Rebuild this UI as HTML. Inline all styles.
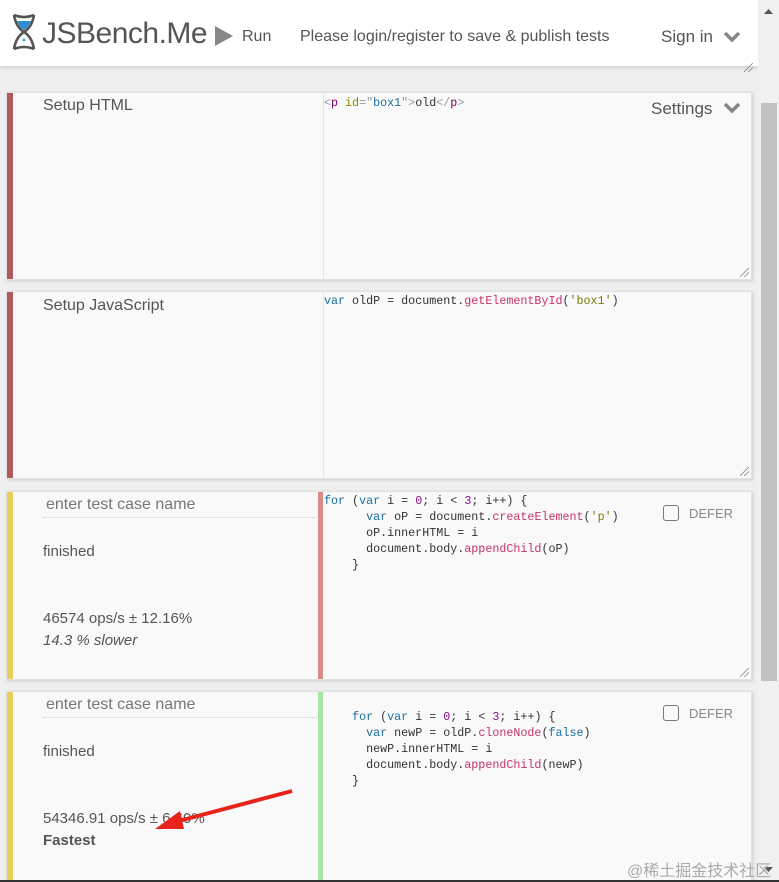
<!DOCTYPE html>
<html><head><meta charset="utf-8"><style>
*{box-sizing:border-box;margin:0;padding:0}
body{width:779px;height:882px;overflow:hidden;background:#efefef;font-family:"Liberation Sans",sans-serif;position:relative;color:#444}
.hdr{position:absolute;left:0;top:0;width:758px;height:66px;background:#fff;box-shadow:0 2px 5px rgba(0,0,0,.12)}
.sb{position:absolute;left:758px;top:0;width:21px;height:882px;background:#f0f0f0}
.thumb{position:absolute;left:761px;top:103px;width:16px;height:578px;background:#c1c1c1}
.panel{position:absolute;left:6px;width:746px;background:#f9f9f9;border:1px solid #e2e2e2;box-shadow:1px 1px 3px rgba(0,0,0,.15)}
.bar{position:absolute;left:0;top:0;bottom:0;width:6px}
.left{position:absolute;left:6px;top:0;bottom:0;width:311px;border-right:1px solid #e4e4e4}
.lbl{position:absolute;left:36px;top:4px;font-size:16px;color:#555}
.code{position:absolute;left:317px;top:2px;font-family:"Liberation Mono",monospace;font-size:11.7px;line-height:16px;white-space:pre;color:#333}
.div{position:absolute;left:311px;top:0;bottom:0;width:5px}
.k{color:#1a6fa0}.n{color:#8a0e8a}.f{color:#c8336a}.s{color:#7a7a0a}.a{color:#8a8a00}.t{color:#800060}.g{color:#999}
.name{position:absolute;left:36px;top:4px;width:276px;height:22px;border-bottom:1px dotted #ccc;font-size:16px;color:#777;padding-left:3px}
.txt{position:absolute;left:36px;font-size:15px;color:#555}
.defer{position:absolute;left:656px;top:13px;font-size:13px;color:#888}
.defer span{display:inline-block;width:16px;height:16px;border:1.5px solid #777;border-radius:3px;vertical-align:-3px;margin-right:10px}
.grip{position:absolute;right:2px;bottom:2px;width:9px;height:9px;background:linear-gradient(135deg,transparent 45%,#888 46%,#888 52%,transparent 53%,transparent 70%,#888 71%,#888 77%,transparent 78%)}
</style></head><body>
<div class="hdr">
<svg style="position:absolute;left:12px;top:13px" width="24" height="38" viewBox="0 0 24 38"><path d="M2 2 Q12 6 22 2 M2 2 Q4 14 12 19 Q20 24 22 36 M22 2 Q20 14 12 19 Q4 24 2 36 M2 36 Q12 32 22 36" stroke="#555" stroke-width="2.6" fill="none"/><path d="M5 8 L19 8 Q16 15 12 17 Q8 15 5 8Z" fill="#2b8fd1"/><circle cx="12" cy="27" r="1.3" fill="#2b8fd1"/></svg>
<div style="position:absolute;left:42px;top:17px;font-size:30px;color:#555;letter-spacing:-0.5px">JSBench.Me</div>
<svg style="position:absolute;left:215px;top:26px" width="18" height="20"><path d="M0 0 L18 10 L0 20Z" fill="#888"/></svg>
<div style="position:absolute;left:242px;top:28px;font-size:16px;color:#555">Run</div>
<div style="position:absolute;left:300px;top:28px;font-size:16px;color:#555">Please login/register to save &amp; publish tests</div>
<div style="position:absolute;left:661px;top:27px;font-size:17px;color:#555">Sign in</div>
<svg style="position:absolute;left:723px;top:31px" width="18" height="12"><path d="M2 2 L9 9 L16 2" stroke="#888" stroke-width="3.5" fill="none"/></svg>
<div class="grip" style="right:5px;bottom:-6px"></div>
</div>
<div class="sb"><svg style="position:absolute;left:6px;top:9px" width="9" height="5"><path d="M0 5 L4.5 0 L9 5Z" fill="#555"/></svg><svg style="position:absolute;left:6px;top:867px" width="9" height="5"><path d="M0 0 L4.5 5 L9 0Z" fill="#555"/></svg></div>
<div class="thumb"></div>

<div class="panel" style="top:92px;height:188px">
<div class="bar" style="background:#b05a5e"></div><div class="left"></div>
<div class="lbl" style="top:4px">Setup HTML</div>
<div class="code"><span class="g">&lt;</span><span class="t">p</span> <span class="a">id</span><span class="g">=″</span><span class="k">box1</span><span class="g">″&gt;</span>old<span class="g">&lt;/</span><span class="t">p</span><span class="g">&gt;</span></div>
<div style="position:absolute;left:644px;top:6px;font-size:17px;color:#555">Settings</div>
<svg style="position:absolute;left:716px;top:9px" width="18" height="12"><path d="M2 2 L9 9 L16 2" stroke="#888" stroke-width="3.5" fill="none"/></svg>
<div class="grip"></div></div>

<div class="panel" style="top:291px;height:188px">
<div class="bar" style="background:#b05a5e"></div><div class="left"></div>
<div class="lbl" style="top:5px">Setup JavaScript</div>
<div class="code" style="top:1px"><span class="k">var</span> oldP = document.<span class="f">getElementById</span>(<span class="s">'box1'</span>)</div>
<div class="grip"></div></div>

<div class="panel" style="top:491px;height:189px">
<div class="bar" style="background:#e9cf5a"></div>
<div class="name">enter test case name</div>
<div class="txt" style="top:51px">finished</div>
<div class="txt" style="top:118px">46574 ops/s ± 12.16%</div>
<div class="txt" style="top:140px;font-style:italic">14.3 % slower</div>
<div class="div" style="background:#dc8a86"></div>
<div class="code" style="top:1px"><span class="k">for</span> (<span class="k">var</span> i = <span class="n">0</span>; i &lt; <span class="n">3</span>; i++) {
      <span class="k">var</span> oP = document.<span class="f">createElement</span>(<span class="s">'p'</span>)
      oP.innerHTML = i
      document.body.<span class="f">appendChild</span>(oP)
    }</div>
<div class="defer"><span></span>DEFER</div>
<div class="grip"></div></div>

<div class="panel" style="top:691px;height:191px">
<div class="bar" style="background:#e9cf5a"></div>
<div class="name">enter test case name</div>
<div class="txt" style="top:51px">finished</div>
<div class="txt" style="top:118px">54346.91 ops/s ± 6.60%</div>
<div class="txt" style="top:140px;font-weight:bold">Fastest</div>
<div class="div" style="background:#a8e6a8"></div>
<div class="code" style="top:17px">    <span class="k">for</span> (<span class="k">var</span> i = <span class="n">0</span>; i &lt; <span class="n">3</span>; i++) {
      <span class="k">var</span> newP = oldP.<span class="f">cloneNode</span>(<span class="k">false</span>)
      newP.innerHTML = i
      document.body.<span class="f">appendChild</span>(newP)
    }</div>
<div class="defer"><span></span>DEFER</div>
</div>
<svg style="position:absolute;left:150px;top:785px" width="150" height="50"><path d="M142 6 L25 37" stroke="#e8231c" stroke-width="4"/><path d="M5 44 L30 26 L34 44Z" fill="#e8231c"/></svg>
<div style="position:absolute;left:627px;top:857px;font-size:16px;color:#aaa;font-family:'Liberation Sans','Noto Sans CJK SC',sans-serif">@稀土掘金技术社区</div>
<div style="position:absolute;left:0;top:880px;width:779px;height:2px;background:#333"></div>
</body></html>
